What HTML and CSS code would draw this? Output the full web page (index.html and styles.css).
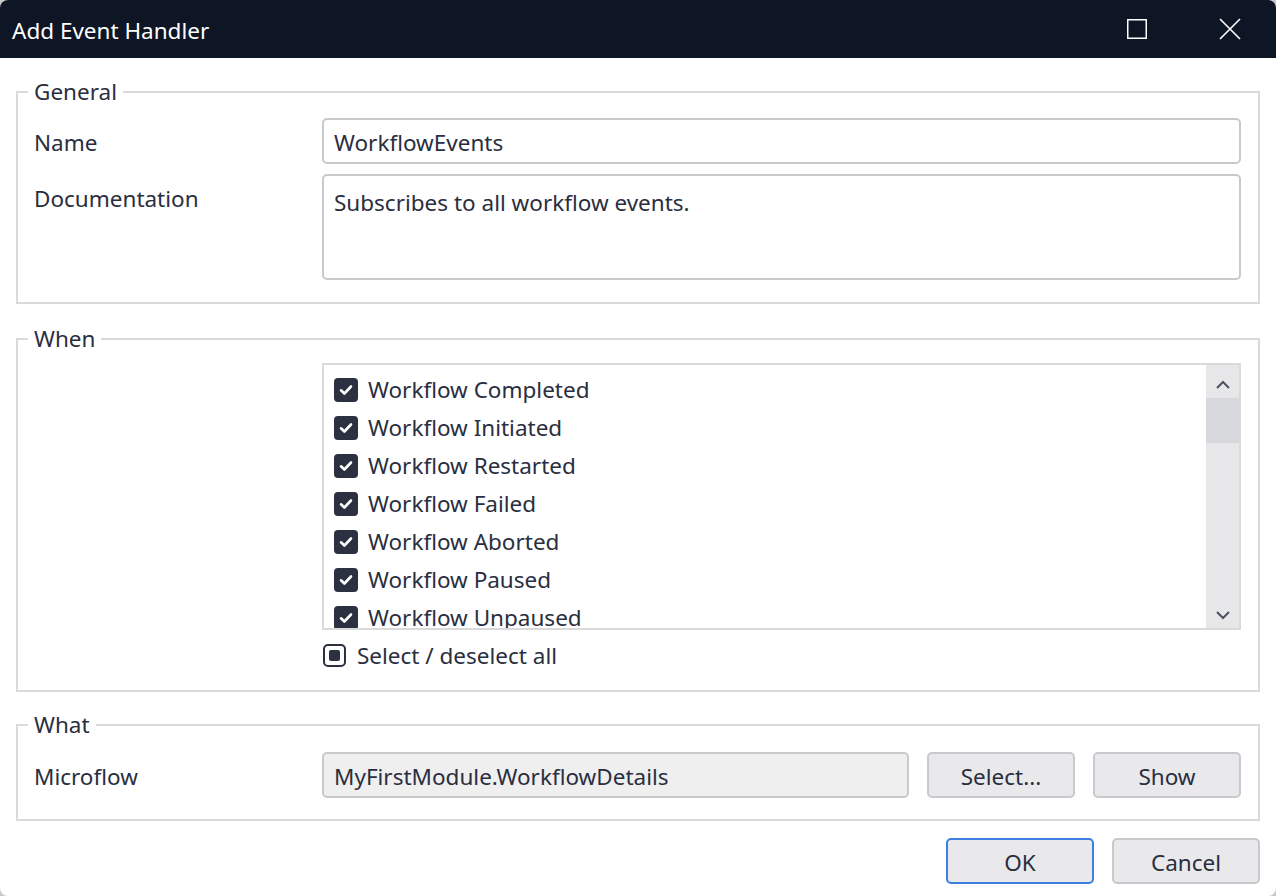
FILE: index.html
```html
<!DOCTYPE html>
<html>
<head>
<meta charset="utf-8">
<link rel="stylesheet" href="styles.css">
</head>
<body>
<div class="window">
  <div class="titlebar">
    <div class="title">Add Event Handler</div>
    <div class="tb-buttons">
      <svg class="tb-icon max" width="20" height="20" viewBox="0 0 20 20"><rect x="0.75" y="0.75" width="18.5" height="18.5" fill="none" stroke="#fff" stroke-width="1.5"/></svg>
      <svg class="tb-icon close" width="22" height="22" viewBox="0 0 22 22"><path d="M1 1 L21 21 M21 1 L1 21" stroke="#fff" stroke-width="1.6" fill="none"/></svg>
    </div>
  </div>
  <div class="content">
    <fieldset class="group general">
      <legend>General</legend>
      <div class="form">
        <label class="lbl">Name</label>
        <div class="input">WorkflowEvents</div>
        <label class="lbl">Documentation</label>
        <div class="input textarea">Subscribes to all workflow events.</div>
      </div>
    </fieldset>

    <fieldset class="group when">
      <legend>When</legend>
      <div class="form">
        <div></div>
        <div class="listcol">
          <div class="listbox">
            <div class="items">
              <div class="item"><span class="cb"><svg width="16" height="16" viewBox="0 0 16 16"><path d="M3 8.3 L6.4 11.5 L13 4.5" stroke="#fff" stroke-width="2.6" fill="none" stroke-linecap="round" stroke-linejoin="round"/></svg></span>Workflow Completed</div>
              <div class="item"><span class="cb"><svg width="16" height="16" viewBox="0 0 16 16"><path d="M3 8.3 L6.4 11.5 L13 4.5" stroke="#fff" stroke-width="2.6" fill="none" stroke-linecap="round" stroke-linejoin="round"/></svg></span>Workflow Initiated</div>
              <div class="item"><span class="cb"><svg width="16" height="16" viewBox="0 0 16 16"><path d="M3 8.3 L6.4 11.5 L13 4.5" stroke="#fff" stroke-width="2.6" fill="none" stroke-linecap="round" stroke-linejoin="round"/></svg></span>Workflow Restarted</div>
              <div class="item"><span class="cb"><svg width="16" height="16" viewBox="0 0 16 16"><path d="M3 8.3 L6.4 11.5 L13 4.5" stroke="#fff" stroke-width="2.6" fill="none" stroke-linecap="round" stroke-linejoin="round"/></svg></span>Workflow Failed</div>
              <div class="item"><span class="cb"><svg width="16" height="16" viewBox="0 0 16 16"><path d="M3 8.3 L6.4 11.5 L13 4.5" stroke="#fff" stroke-width="2.6" fill="none" stroke-linecap="round" stroke-linejoin="round"/></svg></span>Workflow Aborted</div>
              <div class="item"><span class="cb"><svg width="16" height="16" viewBox="0 0 16 16"><path d="M3 8.3 L6.4 11.5 L13 4.5" stroke="#fff" stroke-width="2.6" fill="none" stroke-linecap="round" stroke-linejoin="round"/></svg></span>Workflow Paused</div>
              <div class="item"><span class="cb"><svg width="16" height="16" viewBox="0 0 16 16"><path d="M3 8.3 L6.4 11.5 L13 4.5" stroke="#fff" stroke-width="2.6" fill="none" stroke-linecap="round" stroke-linejoin="round"/></svg></span>Workflow Unpaused</div>
              <div class="item"><span class="cb"><svg width="16" height="16" viewBox="0 0 16 16"><path d="M3 8.3 L6.4 11.5 L13 4.5" stroke="#fff" stroke-width="2.6" fill="none" stroke-linecap="round" stroke-linejoin="round"/></svg></span>Workflow Resumed</div>
            </div>
            <div class="scrollbar">
              <svg class="arrow" width="16" height="10" viewBox="0 0 16 10"><path d="M2 8 L8 2 L14 8" stroke="#4b5162" stroke-width="2" fill="none"/></svg>
              <div class="track"><div class="thumb"></div></div>
              <svg class="arrow" width="16" height="10" viewBox="0 0 16 10"><path d="M2 2 L8 8 L14 2" stroke="#4b5162" stroke-width="2" fill="none"/></svg>
            </div>
          </div>
          <div class="selectall"><span class="cb-partial"><span class="inner"></span></span><span>Select / deselect all</span></div>
        </div>
      </div>
    </fieldset>

    <fieldset class="group what">
      <legend>What</legend>
      <div class="form">
        <label class="lbl">Microflow</label>
        <div class="mfrow">
          <div class="input readonly">MyFirstModule.WorkflowDetails</div>
          <button class="btn">Select...</button>
          <button class="btn">Show</button>
        </div>
      </div>
    </fieldset>

    <div class="footer">
      <button class="btn primary">OK</button>
      <button class="btn">Cancel</button>
    </div>
  </div>
</div>
</body>
</html>
```
FILE: styles.css
```css
* { box-sizing: border-box; }
html, body { margin: 0; padding: 0; }
body {
  background: #c9c9c9;
  font-family: "Noto Sans", "Open Sans", sans-serif;
  color: #2a2e3e;
  width: 1276px;
  height: 896px;
  overflow: hidden;
}
.window {
  width: 1276px;
  height: 896px;
  background: #fff;
  border-radius: 8px;
  overflow: hidden;
  display: flex;
  flex-direction: column;
}
.titlebar {
  height: 58px;
  background: #0e1525;
  color: #fff;
  display: flex;
  align-items: center;
  justify-content: space-between;
  padding-left: 12px;
  flex-shrink: 0;
}
.title { font-size: 22.5px; line-height: 30px; padding-top: 3px; }
.tb-buttons { display: flex; align-items: center; height: 100%; }
.tb-icon.max { margin-right: 72px; }
.tb-icon.close { margin-right: 35px; }
.content {
  padding: 20px 16px 0 16px;
  display: flex;
  flex-direction: column;
}
.group {
  border: 2px solid #dadada;
  margin: 0;
  padding: 0 17px 0 16px;
  min-width: 0;
}
.group legend {
  font-size: 22.5px;
  line-height: 28px;
  padding: 0 6px;
  margin-left: -6px;
}
.form {
  display: grid;
  grid-template-columns: 288px 1fr;
  align-items: start;
}
.lbl {
  font-size: 22.5px;
  line-height: 43px;
  height: 46px;
  padding-top: 3px;
}
.general .form { padding: 12px 0 22px; row-gap: 10px; }
.input {
  height: 46px;
  border: 2px solid #c9c9cd;
  border-radius: 5px;
  font-size: 22.5px;
  line-height: 40px;
  padding: 3px 10px 0;
  background: #fff;
  white-space: nowrap;
}
.input.textarea { height: 106px; line-height: 48px; }
.when { margin-top: 21px; }
.when .form { padding: 10px 0 10px; }
.listbox {
  height: 267px;
  border: 2px solid #dadada;
  display: flex;
  overflow: hidden;
}
.items {
  flex: 1;
  padding: 6px 0 0 10px;
  overflow: hidden;
}
.item {
  height: 38px;
  display: flex;
  align-items: center;
  font-size: 22.5px;
  line-height: 38px;
  white-space: nowrap;
}
.cb {
  width: 24px;
  height: 24px;
  background: #2c3142;
  border-radius: 4px;
  display: inline-flex;
  align-items: center;
  justify-content: center;
  margin-right: 10px;
  flex-shrink: 0;
}
.scrollbar {
  width: 33px;
  background: #e7e7ea;
  display: flex;
  flex-direction: column;
  align-items: center;
}
.scrollbar .arrow { flex-shrink: 0; margin: 15px 0 8px; }
.scrollbar .arrow:last-child { margin: 8px 0 8px; }
.track { flex: 1; width: 100%; }
.thumb { height: 45px; background: #d7d8dc; }
.selectall {
  height: 50px;
  display: flex;
  align-items: center;
  font-size: 22.5px;
  line-height: 30px;
  padding-left: 1px;
  padding-top: 1px;
}
.cb-partial {
  width: 23px;
  height: 23px;
  border: 2px solid #2c3142;
  border-radius: 5px;
  display: inline-flex;
  align-items: center;
  justify-content: center;
  margin-right: 11px;
  flex-shrink: 0;
}
.cb-partial .inner {
  width: 11px;
  height: 11px;
  background: #2c3142;
  border-radius: 2px;
}
.what { margin-top: 19px; }
.what .form { padding: 13px 0 21px; }
.mfrow {
  display: flex;
  gap: 18px;
}
.mfrow .input { flex: 1; }
.input.readonly { background: #efeff0; }
.btn {
  width: 148px;
  height: 46px;
  border: 2px solid #c9c9cd;
  border-radius: 5px;
  background: #e9e9ec;
  font-family: "Noto Sans", "Open Sans", sans-serif;
  font-size: 22.5px;
  color: #2a2e3e;
  padding: 3px 0 0;
}
.btn.primary { border-color: #3c7fe0; }
.footer {
  display: flex;
  justify-content: flex-end;
  gap: 18px;
  margin-top: 17px;
}
```
